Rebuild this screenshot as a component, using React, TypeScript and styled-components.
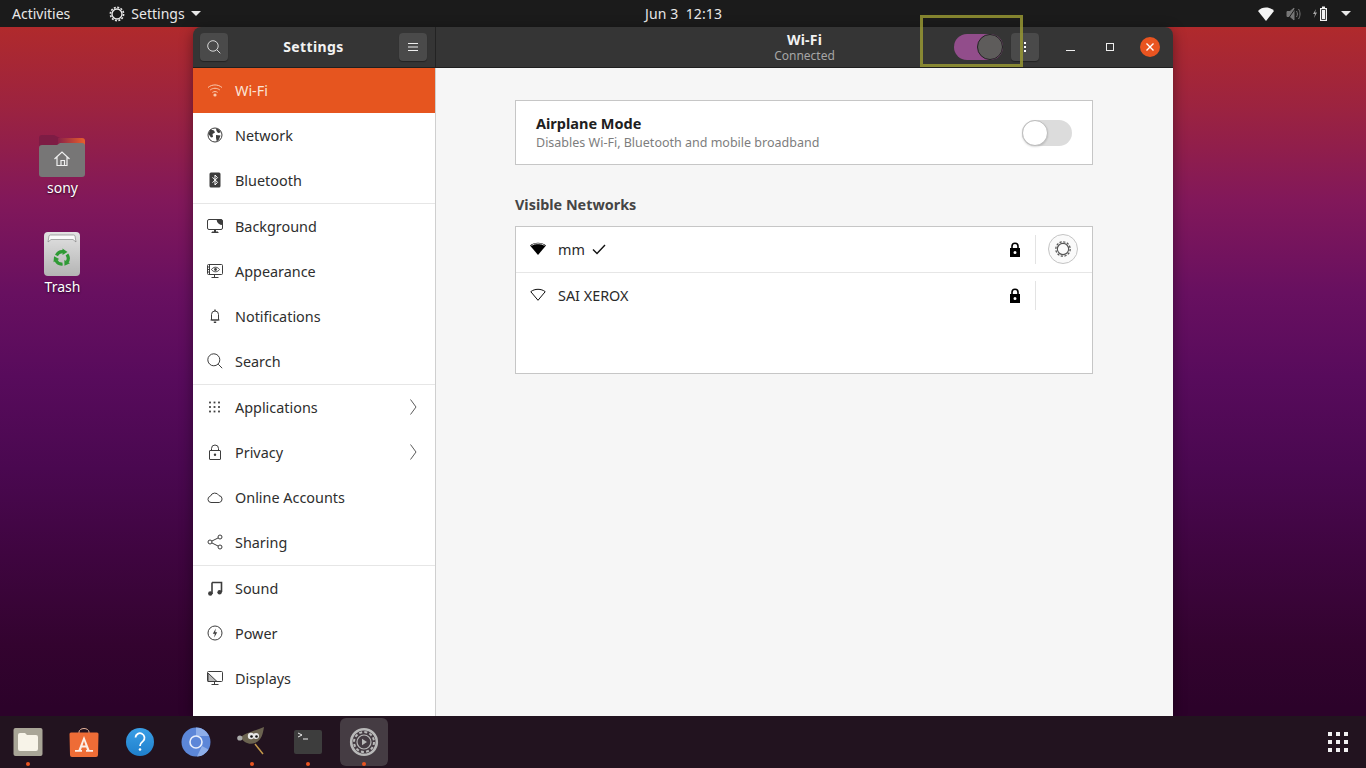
import React from "react";
import styled, { createGlobalStyle } from "styled-components";

const UI_FONT = `"Noto Sans", "Open Sans", sans-serif`;

const GlobalStyle = createGlobalStyle`
  html, body {
    margin: 0;
    padding: 0;
    width: 1366px;
    height: 768px;
    overflow: hidden;
    background: #2c001e;
  }
  * { box-sizing: border-box; }
`;

type IconProps = { size?: number; color?: string };

const Svg = ({ size = 16, color = "#3d3d3d", children, vb = "0 0 16 16" }: IconProps & { children: React.ReactNode; vb?: string }) => (
  <svg width={size} height={size} viewBox={vb} fill="none" stroke={color} strokeWidth="1" style={{ display: "block", flexShrink: 0 }}>
    {children}
  </svg>
);

const WifiIcon = ({ color = "#f9c9ae" }: IconProps) => (
  <Svg color={color}>
    <path d="M1 5.500c4-3.400 10-3.400 14 0M3.200 8c2.800-2.300 6.800-2.300 9.600 0M5.400 10.400c1.500-1.100 3.700-1.100 5.200 0" />
    <circle cx="8" cy="13" r="1.600" fill={color} stroke="none" />
  </Svg>
);
const GlobeIcon = () => (
  <Svg>
    <circle cx="8" cy="8" r="7" />
    <path d="M4 2.500l3 1 1 2-2.500 1.500L6 10l-2 .5L1.500 7 3 3zM9 1.500l3 1 1.800 3L11 6 9.500 4zM9 8l4.500.5L12 12.500 9.800 14.400 9 11z" fill="#3d3d3d" stroke="none" />
  </Svg>
);
const BluetoothIcon = () => (
  <Svg>
    <rect x="2.500" y="0.500" width="11" height="15" rx="1.500" fill="#3d3d3d" stroke="none" />
    <path d="M5.500 5.300l5 5L8 13V3l2.500 2.700-5 5" stroke="#fff" />
  </Svg>
);
const BackgroundIcon = () => (
  <Svg>
    <rect x="0.500" y="1.500" width="15" height="10" rx="1.500" />
    <path d="M9.500 1.500H14a1.500 1.500 0 0 1 1.500 1.500v4A6 6 0 0 1 9.500 1.500zM5 14.500h6v-1H9v-2H7v2H5z" fill="#3d3d3d" stroke="none" />
    <path d="M4.500 14.500h7" />
  </Svg>
);
const AppearanceIcon = () => (
  <Svg>
    <rect x="0.500" y="1.500" width="15" height="10" rx="1" />
    <path d="M2.500 2v9M0.500 4h2M0.500 6.500h2M0.500 9h2" />
    <path d="M4.500 6.500c2-3 6-3 8 0-2 3-6 3-8 0z" />
    <circle cx="8.500" cy="6.500" r="1.400" fill="#3d3d3d" stroke="none" />
    <path d="M7.500 12v2M4.500 14.500h7" />
  </Svg>
);
const BellIcon = () => (
  <Svg>
    <path d="M4.500 12V6.500a3.500 3.500 0 0 1 7 0V12zM3.500 12h9" />
    <path d="M8 1.500v1.500M6.800 14.200h2.400" strokeWidth="1.400" />
  </Svg>
);
const SearchIcon = ({ color = "#3d3d3d", size = 16 }: IconProps) => (
  <Svg color={color} size={size}>
    <circle cx="6.800" cy="6.800" r="6" />
    <path d="M11.200 11.200l4 4" />
  </Svg>
);
const GridIcon = () => (
  <Svg>
    {[3, 7.5, 12].map((x) =>
      [3.5, 8, 12.5].map((y) => <rect key={`${x}-${y}`} x={x - 0.9} y={y - 0.9} width="1.800" height="1.800" fill="#3d3d3d" stroke="none" />)
    )}
  </Svg>
);
const LockIcon = () => (
  <Svg>
    <rect x="2.500" y="6.500" width="11" height="9" rx="0.500" />
    <path d="M4.500 6.500V4.500a3.500 3.500 0 0 1 7 0v2" />
    <circle cx="8" cy="10.800" r="1.200" fill="#3d3d3d" stroke="none" />
  </Svg>
);
const CloudIcon = () => (
  <Svg>
    <path d="M4 13.500a3.200 3.200 0 0 1-.6-6.300A4.700 4.700 0 0 1 12 6.600a3.500 3.500 0 0 1 .3 6.900z" />
  </Svg>
);
const ShareIcon = () => (
  <Svg>
    <circle cx="3" cy="8" r="2" />
    <circle cx="13" cy="3" r="2" />
    <circle cx="13" cy="13" r="2" />
    <path d="M4.800 7.100l6.400-3.200M4.800 8.900l6.400 3.200" />
  </Svg>
);
const MusicIcon = () => (
  <Svg>
    <path d="M5 2.500h9.500V12M5 2.500V14" strokeWidth="1.600" />
    <circle cx="3.300" cy="13.500" r="2.200" fill="#3d3d3d" stroke="none" />
    <circle cx="12.600" cy="12.300" r="2.200" fill="#3d3d3d" stroke="none" />
  </Svg>
);
const PowerIcon = () => (
  <Svg>
    <circle cx="8" cy="8" r="7" />
    <path d="M8.800 3.500L5.800 8.800h2l-.6 3.700 3-5.300h-2z" fill="#3d3d3d" stroke="none" />
  </Svg>
);
const DisplayIcon = () => (
  <Svg>
    <rect x="0.500" y="1.500" width="15" height="10" rx="1" />
    <path d="M1 3l9 8.500H1zM7.500 12v2M4.500 14.500h7" fill="#3d3d3d" fillOpacity="0.35" />
  </Svg>
);
const CogIcon = ({ color = "#3d3d3d", size = 16 }: IconProps) => (
  <Svg color={color} size={size}>
    <circle cx="8" cy="8" r="5" strokeWidth="1.400" />
    <circle cx="8" cy="8" r="6.600" strokeWidth="1.600" strokeDasharray="2 1.460" />
  </Svg>
);
const ThinCogIcon = () => (
  <Svg color="#555" size={18}>
    <circle cx="8" cy="8" r="5" strokeWidth="1" />
    <circle cx="8" cy="8" r="6.400" strokeWidth="1.100" strokeDasharray="2 1.350" />
  </Svg>
);
const NetLockIcon = () => (
  <svg width="12" height="15" viewBox="0 0 12 15" style={{ display: "block" }}>
    <path fillRule="evenodd" fill="#000" d="M1 6h1.200V4.200a3.800 3.800 0 0 1 7.600 0V6H11v9H1zM3.800 6h4.400V4.200a2.200 2.200 0 0 0-4.400 0zM6 9a1.500 1.500 0 1 0 0 3 1.500 1.500 0 0 0 0-3z" />
  </svg>
);

const Desktop = styled.div`
  width: 1366px;
  height: 768px;
  display: flex;
  flex-direction: column;
  position: relative;
  font-family: ${UI_FONT};
  background: linear-gradient(
    180deg,
    #b02a2c 3.5%,
    #9c2340 14%,
    #82185a 26%,
    #681060 38%,
    #580b5c 49%,
    #4a0850 61%,
    #3f0540 72%,
    #33032f 84%,
    #2c022a 92%
  );
`;

const TopBar = styled.header`
  height: 27px;
  flex-shrink: 0;
  background: #1b1b1b;
  color: #e8e8e8;
  font-size: 14px;
  display: grid;
  grid-template-columns: 633px auto 1fr;
  align-items: center;
  padding: 0 15px 0 12px;
`;

const TopLeft = styled.div`
  display: flex;
  align-items: center;
`;

const AppMenu = styled.div`
  display: flex;
  align-items: center;
  gap: 6px;
  margin-left: 39px;
`;

const Caret = styled.span`
  width: 0;
  height: 0;
  border-left: 5px solid transparent;
  border-right: 5px solid transparent;
  border-top: 5px solid #e8e8e8;
`;

const Clock = styled.div`
  letter-spacing: 0.1px;
  white-space: pre;
`;

const Tray = styled.div`
  display: flex;
  align-items: center;
  justify-content: flex-end;
  gap: 12px;
`;

const Middle = styled.div`
  flex: 1;
  display: flex;
  min-height: 0;
`;

const IconColumn = styled.div`
  width: 125px;
  margin-right: 68px;
  display: flex;
  flex-direction: column;
  align-items: center;
  padding-top: 108px;
  gap: 35px;
`;

const DesktopItem = styled.div`
  display: flex;
  flex-direction: column;
  align-items: center;
  color: #fff;
  font-size: 14px;
  line-height: 18px;
  text-shadow: 0 1px 2px rgba(0, 0, 0, 0.7);

  svg {
    display: block;
    margin: 0 1px 2px 0;
  }
`;

const Window = styled.div`
  width: 980px;
  display: flex;
  flex-direction: column;
  border-radius: 8px 8px 0 0;
  overflow: hidden;
  box-shadow: 0 3px 14px rgba(0, 0, 0, 0.4);
`;

const TitleBar = styled.div`
  height: 41px;
  flex-shrink: 0;
  background: #353535;
  border-bottom: 1px solid #1f1f1f;
  display: flex;
  color: #f2f2f2;
`;

const SideHeader = styled.div`
  width: 243px;
  border-right: 1px solid #232323;
  display: flex;
  align-items: center;
  justify-content: space-between;
  padding: 0 8px 0 7px;
`;

const HeaderTitle = styled.div`
  font-size: 14px;
  font-weight: 700;
  line-height: 15px;
  letter-spacing: 0.2px;
`;

const SideTitle = styled(HeaderTitle)`
  margin-bottom: 2px;
  letter-spacing: 0.4px;
`;

const HeaderButton = styled.div`
  width: 28px;
  height: 28px;
  border-radius: 4px;
  background: #4a4a4a;
  box-shadow: 0 1px 1px rgba(0, 0, 0, 0.35);
  display: flex;
  align-items: center;
  justify-content: center;
  flex-shrink: 0;
`;

const MainHeader = styled.div`
  flex: 1;
  position: relative;
  display: flex;
  align-items: center;
  justify-content: flex-end;
  padding-right: 3px;
`;

const HeaderCenter = styled.div`
  position: absolute;
  left: 0;
  right: 0;
  text-align: center;
  top: 5px;
`;

const HeaderSub = styled.div`
  font-size: 12px;
  line-height: 15px;
  margin-top: 1px;
  color: #a6a6a6;
`;

const BigSwitch = styled.div`
  width: 49px;
  height: 26px;
  border-radius: 13px;
  background: #924d8b;
  display: flex;
  justify-content: flex-end;
  margin-right: 8px;
`;

const BigKnob = styled.div`
  width: 26px;
  height: 26px;
  border-radius: 50%;
  background: #5e5c5b;
  border: 1px solid #222;
`;

const DotsButton = styled(HeaderButton)`
  flex-direction: column;
  gap: 2px;
  margin-right: 11px;
`;

const Dot = styled.span`
  width: 2px;
  height: 2px;
  background: #fff;
`;

const WinControl = styled.div`
  width: 40px;
  height: 24px;
  display: flex;
  align-items: center;
  justify-content: center;
`;

const MinimizeMark = styled.span`
  width: 9px;
  height: 1px;
  background: #eee;
  margin-top: 7px;
`;

const MaximizeMark = styled.span`
  width: 8px;
  height: 8px;
  border: 1px solid #eee;
`;

const CloseDisc = styled.div`
  width: 20px;
  height: 20px;
  border-radius: 50%;
  background: #e95420;
  display: flex;
  align-items: center;
  justify-content: center;
`;

const Body = styled.div`
  flex: 1;
  display: flex;
  min-height: 0;
`;

const Sidebar = styled.nav`
  width: 243px;
  background: #fff;
  border-right: 1px solid #cfcfcf;
  overflow: hidden;
`;

const Row = styled.div<{ $active?: boolean; $sep?: boolean }>`
  height: ${(p) => (p.$sep ? 46 : 45)}px;
  padding: 0 18px 1px 14px;
  display: flex;
  align-items: center;
  gap: 12px;
  font-size: 14.4px;
  color: ${(p) => (p.$active ? "#fbe3d6" : "#2e2e2e")};
  background: ${(p) => (p.$active ? "#e6551f" : "transparent")};
  border-bottom: ${(p) => (p.$sep ? "1px solid #e6e6e6" : "none")};
`;

const RowLabel = styled.span`
  flex: 1;
`;

const Content = styled.main`
  flex: 1;
  background: #f6f6f6;
  padding: 32px 80px 0 79px;
`;

const Frame = styled.section`
  background: #fff;
  border: 1px solid #c6c6c6;
`;

const AirplaneFrame = styled(Frame)`
  height: 65px;
  display: flex;
  align-items: center;
  justify-content: space-between;
  padding: 0 20px;
`;

const AirTitle = styled.div`
  font-size: 14.5px;
  font-weight: 700;
  line-height: 18px;
  margin-bottom: 2px;
  color: #202020;
`;

const AirSub = styled.div`
  font-size: 12.5px;
  line-height: 17px;
  color: #7d7d7d;
`;

const OffSwitch = styled.div`
  width: 50px;
  height: 26px;
  border-radius: 13px;
  background: #dcdcdc;
`;

const OffKnob = styled.div`
  width: 26px;
  height: 26px;
  border-radius: 50%;
  background: #fff;
  border: 1px solid #bdbdbd;
  box-shadow: 0 1px 2px rgba(0, 0, 0, 0.15);
`;

const SectionTitle = styled.h2`
  margin: 30px 0 11px;
  font-size: 14.4px;
  line-height: 20px;
  font-weight: 700;
  color: #454545;
`;

const NetworkList = styled(Frame)`
  height: 148px;
`;

const NetworkRow = styled.div<{ $sep?: boolean }>`
  height: ${(p) => (p.$sep ? 46 : 45)}px;
  display: flex;
  align-items: center;
  padding: 0 0 1px 14px;
  font-size: 14.4px;
  color: #2a2a2a;
  border-bottom: ${(p) => (p.$sep ? "1px solid #e6e6e6" : "none")};
`;

const NetName = styled.span`
  margin-left: 12px;
`;

const Check = styled.span`
  margin-left: 7px;
  display: flex;
`;

const NetLockSlot = styled.div`
  margin-left: auto;
  margin-right: 14px;
`;

const GearCell = styled.div`
  width: 57px;
  height: 29px;
  border-left: 1px solid #e3e3e3;
  display: flex;
  align-items: center;
  justify-content: center;
  padding-right: 2px;
`;

const GearButton = styled.div`
  width: 30px;
  height: 30px;
  border-radius: 50%;
  background: #fafafa;
  border: 1px solid #c4c4c4;
  display: flex;
  align-items: center;
  justify-content: center;
`;

const Dock = styled.footer`
  height: 52px;
  flex-shrink: 0;
  background: #22131f;
  display: flex;
  align-items: center;
  padding-left: 4px;
`;

const DockItem = styled.div<{ $focused?: boolean; $running?: boolean }>`
  width: 48px;
  height: 48px;
  margin-right: 8px;
  border-radius: 6px;
  position: relative;
  display: flex;
  align-items: center;
  justify-content: center;
  background: ${(p) => (p.$focused ? "#453c43" : "transparent")};

  &::after {
    content: "";
    display: ${(p) => (p.$running ? "block" : "none")};
    position: absolute;
    left: 22px;
    bottom: 0;
    width: 4px;
    height: 4px;
    border-radius: 50%;
    background: #e95420;
  }
`;

const AppGrid = styled.div`
  margin-left: auto;
  margin-right: 18px;
  display: grid;
  grid-template-columns: repeat(3, 4px);
  gap: 4px;
`;

const GridDot = styled.span`
  width: 4px;
  height: 4px;
  background: #f2f0f2;
`;

const Highlight = styled.div`
  position: absolute;
  left: 920px;
  top: 15px;
  width: 103px;
  height: 52px;
  border: 3px solid rgba(150, 150, 50, 0.85);
  pointer-events: none;
`;

const rows: { label: string; icon: React.ReactNode; sep?: boolean; more?: boolean; active?: boolean }[] = [
  { label: "Wi-Fi", icon: <WifiIcon />, active: true },
  { label: "Network", icon: <GlobeIcon /> },
  { label: "Bluetooth", icon: <BluetoothIcon />, sep: true },
  { label: "Background", icon: <BackgroundIcon /> },
  { label: "Appearance", icon: <AppearanceIcon /> },
  { label: "Notifications", icon: <BellIcon /> },
  { label: "Search", icon: <SearchIcon />, sep: true },
  { label: "Applications", icon: <GridIcon />, more: true },
  { label: "Privacy", icon: <LockIcon />, more: true },
  { label: "Online Accounts", icon: <CloudIcon /> },
  { label: "Sharing", icon: <ShareIcon />, sep: true },
  { label: "Sound", icon: <MusicIcon /> },
  { label: "Power", icon: <PowerIcon /> },
  { label: "Displays", icon: <DisplayIcon /> },
];

const Chevron = () => (
  <svg width="7" height="16" viewBox="0 0 7 16" fill="none" stroke="#5a5a5a" style={{ display: "block" }}>
    <path d="M.5 .5L6 8 .5 15.500" />
  </svg>
);

const HomeFolder = () => (
  <svg width="46" height="42" viewBox="0 0 46 42">
    <defs>
      <linearGradient id="folderTab" x1="0" y1="0" x2="1" y2="0">
        <stop offset="0" stopColor="#8a2148" />
        <stop offset="1" stopColor="#e8602c" />
      </linearGradient>
    </defs>
    <path d="M0 3a3 3 0 0 1 3-3h12l6 3v8H0z" fill="#7d1c44" />
    <path d="M19 3h24a3 3 0 0 1 3 3v6H19z" fill="url(#folderTab)" />
    <path d="M0 13a3 3 0 0 1 3-3h15l3-2h22a3 3 0 0 1 3 3v28a3 3 0 0 1-3 3H3a3 3 0 0 1-3-3z" fill="#777676" />
    <path d="M15.500 24l7.500-7 7.500 7M18 22v8.500h10V22M22 30.500v-5h3.500v5" fill="none" stroke="#f0f0f0" strokeWidth="1.200" />
  </svg>
);

const TrashCan = () => (
  <svg width="36" height="44" viewBox="0 0 36 44">
    <defs>
      <linearGradient id="can" x1="0" y1="0" x2="0" y2="1">
        <stop offset="0" stopColor="#e2e2e2" />
        <stop offset="1" stopColor="#b4b4b4" />
      </linearGradient>
    </defs>
    <rect width="36" height="44" rx="4" fill="url(#can)" />
    <path d="M4 10l1-6q.3-1 1.500-1h23q1.200 0 1.500 1l1 6-3-2.500H7z" fill="#fafafa" stroke="#777" strokeWidth="0.600" />
    {[0, 120, 240].map((a) => (
      <g key={a} transform={`rotate(${a} 18 26)`}>
        <path d="M12.500 23.500A6.500 6.500 0 0 1 19 19.600" fill="none" stroke="#2f9a35" strokeWidth="3.200" />
        <path d="M18.500 16.500l5 3.500-5 3z" fill="#2f9a35" />
      </g>
    ))}
  </svg>
);

const TrayWifi = () => (
  <svg width="16" height="14" viewBox="0 0 16 14"><path d="M0 4C4-.6 12-.6 16 4l-8 10z" fill="#f4f4f4" /></svg>
);
const TrayVolume = () => (
  <svg width="15" height="14" viewBox="0 0 15 14" fill="none" stroke="#777">
    <path d="M1 4.500h3L8 1v12L4 9.500H1z" fill="#777" />
    <path d="M10.500 4c1.200 2 1.200 4 0 6M12.500 2c2 3 2 7 0 10" />
    <path d="M1 13.500L10 .5" stroke="#1b1b1b" />
  </svg>
);
const TrayBattery = () => (
  <svg width="16" height="15" viewBox="0 0 16 15">
    <path d="M3 3L0 8h2l-1 4 3-5.500H2z" fill="#aaa" />
    <path d="M7 2h2V0.500h3V2h2v13H7z" fill="#f2f2f2" />
    <rect x="8.200" y="3.200" width="4.600" height="10.600" fill="#1b1b1b" />
    <rect x="9" y="4" width="3" height="9" fill="#f2f2f2" />
  </svg>
);

const Dock1 = () => (
  <svg width="30" height="30" viewBox="0 0 30 30">
    <rect width="29" height="28" x="0.500" y="1" rx="2" fill="#a9a597" />
    <path d="M5 8a2 2 0 0 1 2-2h5l2 2h9a2 2 0 0 1 2 2v12a2 2 0 0 1-2 2H7a2 2 0 0 1-2-2z" fill="#f7f3e8" />
  </svg>
);
const Dock2 = () => (
  <svg width="30" height="29" viewBox="0 0 30 29">
    <path d="M10 5V4a5 3.500 0 0 1 10 0v1" fill="none" stroke="#e7b39b" />
    <path d="M2 4.500h26a1.500 1.500 0 0 1 1.500 1.500l-.5 21a2 2 0 0 1-2 2H3a2 2 0 0 1-2-2L.5 6A1.500 1.500 0 0 1 2 4.500z" fill="#ee6c36" />
    <path d="M15 8L9.500 22H6v1.800h7V22h-1l.8-2.500h4.400L18 22h-1v1.800h7V22h-3.500zM13.500 17.500L15 13l1.500 4.500z" fill="#fbeee7" />
  </svg>
);
const Dock3 = () => (
  <svg width="30" height="30" viewBox="0 0 30 30">
    <defs>
      <linearGradient id="help" x1="0" y1="0" x2="0" y2="1">
        <stop offset="0" stopColor="#3a9fe6" />
        <stop offset="1" stopColor="#1f7fcc" />
      </linearGradient>
    </defs>
    <circle cx="15" cy="15" r="14" fill="url(#help)" />
    <path d="M10.500 10.500a4.500 4.500 0 1 1 7.500 3.600c-2 1.500-3 2.400-3 4.900" fill="none" stroke="#fff" strokeWidth="1.800" />
    <circle cx="15" cy="22.500" r="1.300" fill="#fff" />
  </svg>
);
const Dock4 = () => (
  <svg width="30" height="30" viewBox="0 0 30 30">
    <circle cx="15" cy="15" r="14.500" fill="#5c86d8" />
    <path d="M15 .5A14.500 14.500 0 0 1 28 9H15zM27.500 22.500A14.500 14.500 0 0 1 16 29.500L21 19z" fill="#8eaee9" />
    <circle cx="15" cy="15" r="6" fill="#5c86d8" stroke="#e8eefb" strokeWidth="1.600" />
  </svg>
);
const Dock5 = () => (
  <svg width="30" height="30" viewBox="0 0 30 30">
    <path d="M4 10C8 6 18 4 27 0c-1 6-2 13-9 16-5 2-12 0-14-6z" fill="#6b6350" />
    <circle cx="14" cy="9" r="3.200" fill="#e8e8e8" />
    <circle cx="19" cy="9" r="3" fill="#e8e8e8" />
    <circle cx="14.500" cy="9.500" r="1.300" fill="#111" />
    <circle cx="19.500" cy="9.500" r="1.300" fill="#111" />
    <circle cx="2.800" cy="11" r="2.600" fill="#aaa" />
    <path d="M18 17l8 10" stroke="#c59a4b" strokeWidth="1.500" />
  </svg>
);
const Dock6 = () => (
  <svg width="30" height="26" viewBox="0 0 30 26">
    <rect width="28" height="24" x="1" y="1" rx="2" fill="#3d3d3d" />
    <path d="M5 4l4 2-4 2" fill="none" stroke="#eee" strokeWidth="1" />
    <path d="M10 10h5" stroke="#eee" strokeWidth="1" />
  </svg>
);
const Dock7 = () => (
  <svg width="30" height="30" viewBox="0 0 30 30" fill="none">
    <circle cx="15" cy="15" r="12.800" stroke="#b9b9b9" strokeWidth="2.600" />
    <circle cx="15" cy="15" r="10" stroke="#b9b9b9" strokeWidth="2" strokeDasharray="3 2.240" />
    <circle cx="15" cy="15" r="7" stroke="#b9b9b9" strokeWidth="1.200" />
    <path d="M13 11.800l5 3.200-5 3.200z" fill="#b9b9b9" />
  </svg>
);

export default function App() {
  return (
    <>
      <GlobalStyle />
      <Desktop>
        <TopBar>
          <TopLeft>
            Activities
            <AppMenu>
              <CogIcon color="#e8e8e8" size={16} />
              Settings
              <Caret />
            </AppMenu>
          </TopLeft>
          <Clock>{"Jun 3  12:13"}</Clock>
          <Tray>
            <TrayWifi />
            <TrayVolume />
            <TrayBattery />
            <Caret />
          </Tray>
        </TopBar>

        <Middle>
          <IconColumn>
            <DesktopItem>
              <HomeFolder />
              sony
            </DesktopItem>
            <DesktopItem>
              <TrashCan />
              Trash
            </DesktopItem>
          </IconColumn>

          <Window>
            <TitleBar>
              <SideHeader>
                <HeaderButton><SearchIcon color="#eeeeee" size={14} /></HeaderButton>
                <SideTitle>Settings</SideTitle>
                <HeaderButton>
                  <svg width="12" height="10" viewBox="0 0 12 10" stroke="#eee"><path d="M1 1.500h10M1 5h10M1 8.500h10" /></svg>
                </HeaderButton>
              </SideHeader>
              <MainHeader>
                <HeaderCenter>
                  <HeaderTitle>Wi-Fi</HeaderTitle>
                  <HeaderSub>Connected</HeaderSub>
                </HeaderCenter>
                <BigSwitch><BigKnob /></BigSwitch>
                <DotsButton><Dot /><Dot /><Dot /></DotsButton>
                <WinControl><MinimizeMark /></WinControl>
                <WinControl><MaximizeMark /></WinControl>
                <WinControl>
                  <CloseDisc>
                    <svg width="10" height="10" viewBox="0 0 10 10" stroke="#fff" strokeWidth="1.400"><path d="M1.500 1.500l7 7M8.500 1.500l-7 7" /></svg>
                  </CloseDisc>
                </WinControl>
              </MainHeader>
            </TitleBar>

            <Body>
              <Sidebar>
                {rows.map((r) => (
                  <Row key={r.label} $active={r.active} $sep={r.sep}>
                    {r.icon}
                    <RowLabel>{r.label}</RowLabel>
                    {r.more && <Chevron />}
                  </Row>
                ))}
              </Sidebar>
              <Content>
                <AirplaneFrame>
                  <div>
                    <AirTitle>Airplane Mode</AirTitle>
                    <AirSub>Disables Wi-Fi, Bluetooth and mobile broadband</AirSub>
                  </div>
                  <OffSwitch><OffKnob /></OffSwitch>
                </AirplaneFrame>
                <SectionTitle>Visible Networks</SectionTitle>
                <NetworkList>
                  <NetworkRow $sep>
                    <svg width="16" height="14" viewBox="0 0 16 14">
                      <path d="M0 3.500C4-.2 12-.2 16 3.500L8 13z" fill="#000" />
                      <path d="M1.500 3.500c3.500-2.400 9.500-2.400 13 0" stroke="#fff" strokeWidth="0.800" fill="none" />
                    </svg>
                    <NetName>mm</NetName>
                    <Check>
                      <svg width="14" height="11" viewBox="0 0 14 11" fill="none" stroke="#111" strokeWidth="1.400"><path d="M1 5.500l4 4L13 1" /></svg>
                    </Check>
                    <NetLockSlot><NetLockIcon /></NetLockSlot>
                    <GearCell>
                      <GearButton><ThinCogIcon /></GearButton>
                    </GearCell>
                  </NetworkRow>
                  <NetworkRow>
                    <svg width="16" height="14" viewBox="0 0 16 14" fill="none" stroke="#111">
                      <path d="M.8 3.700C4.500.5 11.500.5 15.200 3.700L8 12.300z" />
                    </svg>
                    <NetName>SAI XEROX</NetName>
                    <NetLockSlot><NetLockIcon /></NetLockSlot>
                    <GearCell />
                  </NetworkRow>
                </NetworkList>
              </Content>
            </Body>
          </Window>
        </Middle>

        <Dock>
          <DockItem $running><Dock1 /></DockItem>
          <DockItem><Dock2 /></DockItem>
          <DockItem><Dock3 /></DockItem>
          <DockItem><Dock4 /></DockItem>
          <DockItem $running><Dock5 /></DockItem>
          <DockItem $running><Dock6 /></DockItem>
          <DockItem $running $focused><Dock7 /></DockItem>
          <AppGrid>
            {Array.from({ length: 9 }).map((_, i) => <GridDot key={i} />)}
          </AppGrid>
        </Dock>

        <Highlight />
      </Desktop>
    </>
  );
}
